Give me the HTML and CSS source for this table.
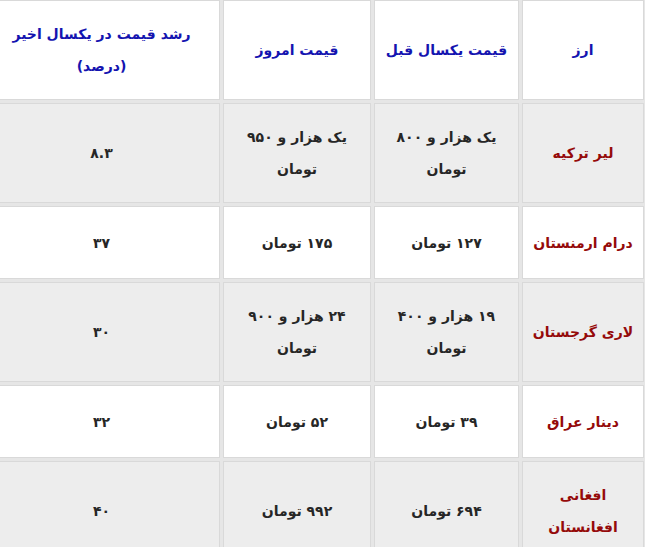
FILE: index.html
```html
<!DOCTYPE html>
<html lang="fa">
<head>
<meta charset="utf-8">
<link rel="stylesheet" href="styles.css">
</head>
<body>
<div class="wrap">
<table class="rates" dir="rtl">
<colgroup>
<col class="c1"><col class="c2"><col class="c3"><col class="c4">
</colgroup>
<thead>
<tr>
<th>ارز</th>
<th>قیمت یکسال قبل</th>
<th>قیمت امروز</th>
<th>رشد قیمت در یکسال اخیر<br>(درصد)</th>
</tr>
</thead>
<tbody>
<tr class="alt">
<td class="name">لیر ترکیه</td>
<td>یک هزار و ۸۰۰<br>تومان</td>
<td>یک هزار و ۹۵۰<br>تومان</td>
<td>۸.۳</td>
</tr>
<tr>
<td class="name">درام ارمنستان</td>
<td>۱۲۷ تومان</td>
<td>۱۷۵ تومان</td>
<td>۳۷</td>
</tr>
<tr class="alt">
<td class="name">لاری گرجستان</td>
<td>۱۹ هزار و ۴۰۰<br>تومان</td>
<td>۲۴ هزار و ۹۰۰<br>تومان</td>
<td>۳۰</td>
</tr>
<tr>
<td class="name">دینار عراق</td>
<td>۳۹ تومان</td>
<td>۵۲ تومان</td>
<td>۳۲</td>
</tr>
<tr class="alt">
<td class="name">افغانی<br>افغانستان</td>
<td>۶۹۴ تومان</td>
<td>۹۹۲ تومان</td>
<td>۴۰</td>
</tr>
</tbody>
</table>
</div>
</body>
</html>
```
FILE: styles.css
```css
html, body {
  margin: 0;
  padding: 0;
  background: #ffffff;
}
.wrap {
  width: 645px;
  height: 547px;
  overflow: hidden;
}
.rates {
  table-layout: fixed;
  width: 667px;
  margin: -3px 0 0 -20px;
  border-collapse: separate;
  border-spacing: 3px;
  background: #e6e6e6;
  font-family: "DejaVu Sans", "Noto Sans", sans-serif;
  font-size: 14px;
  font-weight: bold;
  color: #262626;
}
.c1 { width: 122px; }
.c2 { width: 145px; }
.c3 { width: 148px; }
.c4 { width: 237px; }
.rates th,
.rates td {
  box-sizing: border-box;
  border: 1px solid #d9d9d9;
  padding: 17px 6px;
  height: 73px;
  line-height: 32px;
  text-align: center;
  vertical-align: middle;
  background: #ffffff;
}
.rates th {
  color: #1414b0;
  height: 99px;
}
.rates tr.alt td {
  background: #ededed;
}
.rates td.name {
  color: #950a0a;
}
```
